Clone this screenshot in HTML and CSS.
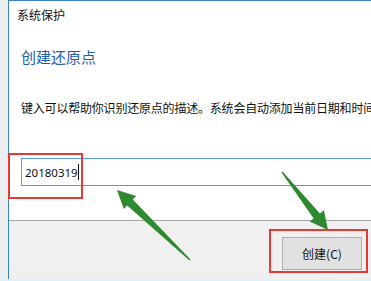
FILE: index.html
```html
<!DOCTYPE html>
<html>
<head>
  <title>系统保护</title>
  <link rel="stylesheet" href="styles.css">
</head>
<body>
  <div class="dialog">
    <div class="title-bar">系统保护</div>
    <div class="content">
      <h1 class="heading">创建还原点</h1>
      <p class="desc">键入可以帮助你识别还原点的描述。系统会自动添加当前日期和时间。</p>
      <div class="input-box">
        <span class="input-text">20180319</span><span class="caret"></span>
      </div>
    </div>
    <div class="footer">
      <button class="btn">创建(C)</button>
    </div>
  </div>
  <div class="taskbar"></div>

  <!-- Annotations -->
  <div class="mark mark-input"></div>
  <div class="mark mark-btn"></div>
  <svg class="arrows" viewBox="0 0 371 281">
    <polygon fill="#2f8a2f" points="117,190 136.2,196 132.8,199.6 190.5,259.5 189.5,260.5 127.2,205.4 123.8,209"/>
    <polygon fill="#2f8a2f" points="328,230 323.9,210.3 319.9,213.4 282.5,171.6 281.5,172.4 313.7,218.4 309.7,221.5"/>
  </svg>
</body>
</html>
```

FILE: styles.css
```css
body {
  margin: 0;
  width: 371px;
  height: 281px;
  overflow: hidden;
  background: #eceeef;
  font-family: 'Noto Sans CJK SC', 'Noto Sans', sans-serif;
  position: relative;
}

/* Dialog window */
.dialog {
  margin-left: 8px;
  height: 278px;
  border-top: 1px solid #3b82c4;
  border-left: 1px solid #3b82c4;
  background: #fff;
  display: flex;
  flex-direction: column;
}

.title-bar {
  padding: 6px 0 0 8px;
  height: 24px;
  font-size: 12px;
  color: #111;
  line-height: 16px;
}

.content {
  flex: 1;
  padding: 0 0 0 12px;
  white-space: nowrap;
  overflow: hidden;
}

.heading {
  margin: 16px 0 0 0;
  font-size: 15px;
  font-weight: normal;
  color: #1f5ea8;
  line-height: 20px;
}

.desc {
  margin: 33px 0 0 0;
  font-size: 12px;
  letter-spacing: -0.2px;
  color: #111;
  line-height: 16px;
}

.input-box {
  margin-top: 42px;
  height: 26px;
  border: 1px solid #5a9bd8;
  border-right: none;
  display: flex;
  align-items: center;
  padding-left: 3px;
}

.input-text {
  font-family: 'Noto Sans', sans-serif;
  font-size: 11.5px;
  color: #111;
}

.caret {
  width: 1px;
  height: 16px;
  background: #111;
}

.footer {
  height: 59px;
  border-top: 1px solid #a8a8a8;
  background: #f0f0f0;
  display: flex;
  justify-content: flex-end;
  align-items: flex-start;
  padding: 16px 9px 0 0;
  box-sizing: border-box;
}

.btn {
  width: 80px;
  height: 33px;
  background: #e1e1e1;
  border: 1px solid #adadad;
  font-family: 'Noto Sans CJK SC', sans-serif;
  font-size: 12px;
  color: #111;
  padding: 0;
}

.taskbar {
  height: 3px;
  background: #dcf1fa;
}

/* Red highlight boxes */
.mark {
  position: absolute;
  border: 2px solid #e53935;
}

.mark-input {
  left: 8px;
  top: 153px;
  width: 71px;
  height: 42px;
}

.mark-btn {
  left: 269px;
  top: 229px;
  width: 95px;
  height: 40px;
}

.arrows {
  position: absolute;
  left: 0;
  top: 0;
  width: 371px;
  height: 281px;
}
```
